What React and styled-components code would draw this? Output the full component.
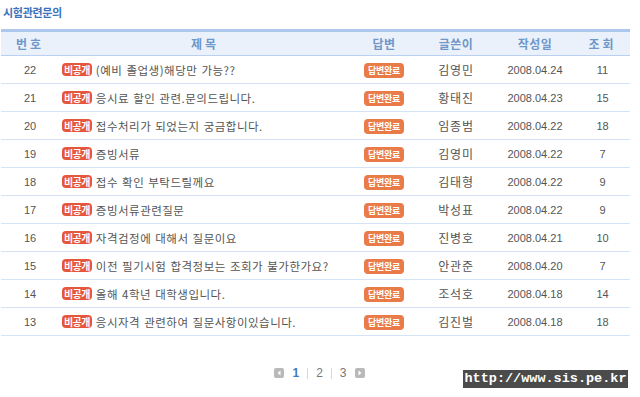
import styled, { createGlobalStyle } from "styled-components";

const GlobalStyle = createGlobalStyle`
  body {
    margin: 0;
    background: #fff;
    font-family: "Noto Sans CJK KR", "Noto Sans", sans-serif;
  }
`;

const rows = [
  [22, "(예비 졸업생)해당만 가능??", "김영민", "2008.04.24", 11],
  [21, "응시료 할인 관련.문의드립니다.", "황태진", "2008.04.23", 15],
  [20, "접수처리가 되었는지 궁금합니다.", "임종범", "2008.04.22", 18],
  [19, "증빙서류", "김영미", "2008.04.22", 7],
  [18, "접수 확인 부탁드릴께요", "김태형", "2008.04.22", 9],
  [17, "증빙서류관련질문", "박성표", "2008.04.22", 9],
  [16, "자격검정에 대해서 질문이요", "진병호", "2008.04.21", 10],
  [15, "이전 필기시험 합격정보는 조회가 불가한가요?", "안관준", "2008.04.20", 7],
  [14, "올해 4학년 대학생입니다.", "조석호", "2008.04.18", 14],
  [13, "응시자격 관련하여 질문사항이있습니다.", "김진벌", "2008.04.18", 18],
];

const Page = styled.div`
  position: relative;
  width: 640px;
  height: 397px;
  padding: 5px 0 0 1px;
  box-sizing: border-box;
`;

const Title = styled.h2`
  margin: 0 0 0 2px;
  font-size: 11px;
  line-height: 14px;
  font-weight: 700;
  color: #3a72bd;
  letter-spacing: -0.3px;
`;

const Table = styled.table`
  margin-top: 10px;
  width: 629px;
  border-collapse: collapse;
  table-layout: fixed;
  font-size: 11px;
  color: #555;
`;

const HeadRow = styled.tr`
  background: #eaf1fb;
  border-top: 3px solid #adc8ec;
  border-bottom: 1px solid #b9d0f0;
`;

const Th = styled.th`
  height: 23px;
  padding: 0;
  font-size: 12px;
  font-weight: 700;
  color: #6f97c9;
  letter-spacing: ${(p) => (p.$wide ? "3px" : "0.5px")};
  text-align: center;
`;

const Row = styled.tr`
  border-bottom: 1px solid #d3e3f8;
`;

const Td = styled.td`
  height: 27px;
  padding: 0;
  text-align: ${(p) => (p.$left ? "left" : "center")};
  padding-left: ${(p) => (p.$left ? "3px" : "0")};
  white-space: nowrap;
  overflow: hidden;
  font-family: ${(p) =>
    p.$num ? '"Liberation Sans", "Noto Sans", sans-serif' : "inherit"};
  color: #555;
`;

const Secret = styled.span`
  display: inline-block;
  vertical-align: 1px;
  margin-right: 4px;
  padding: 0 2px;
  height: 13px;
  line-height: 13px;
  border-radius: 4px;
  background: #e5573d;
  color: #fff;
  font-size: 10px;
  font-weight: 700;
  letter-spacing: -0.6px;
`;

const Subject = styled.span`
  font-size: 11.5px;
  letter-spacing: 0.5px;
  word-spacing: 1px;
`;

const Writer = styled.span`
  font-size: 12px;
  letter-spacing: 0.8px;
`;

const Done = styled.span`
  display: inline-block;
  padding: 0 4px;
  height: 15px;
  line-height: 15px;
  border-radius: 4px;
  background: #e97b48;
  color: #fff;
  font-size: 9px;
  font-weight: 700;
  letter-spacing: -0.3px;
`;

const Pager = styled.div`
  display: flex;
  justify-content: center;
  align-items: center;
  gap: 8px;
  margin-top: 30px;
  padding-right: 2px;
  font-family: "Liberation Sans", sans-serif;
  font-size: 12px;
  color: #777;
`;

const Arrow = styled.span`
  display: inline-flex;
  align-items: center;
  justify-content: center;
  width: 10px;
  height: 10px;
  border-radius: 2px;
  background: #b9b9b9;
`;

const PageNum = styled.span`
  color: ${(p) => (p.$active ? "#3f7ac7" : "#777")};
  font-weight: ${(p) => (p.$active ? 700 : 400)};
`;

const Sep = styled.span`
  width: 1px;
  height: 11px;
  background: #d8d8d8;
`;

const Stamp = styled.div`
  position: absolute;
  left: 463px;
  top: 370px;
  width: 165px;
  height: 18px;
  line-height: 18px;
  background: #4b4b4b;
  color: #fff;
  font-family: "Liberation Mono", monospace;
  font-weight: 700;
  font-size: 13.5px;
  text-align: center;
`;

const Tri = ({ dir }) => (
  <svg width="6" height="6" viewBox="0 0 6 6">
    <path
      d={dir === "left" ? "M4.5 0.5 L1.5 3 L4.5 5.5 Z" : "M1.5 0.5 L4.5 3 L1.5 5.5 Z"}
      fill="#fff"
    />
  </svg>
);

export default function App() {
  return (
    <Page>
      <GlobalStyle />
      <Title>시험관련문의</Title>
      <Table>
        <colgroup>
          <col style={{ width: 58 }} />
          <col style={{ width: 292 }} />
          <col style={{ width: 66 }} />
          <col style={{ width: 78 }} />
          <col style={{ width: 80 }} />
          <col style={{ width: 55 }} />
        </colgroup>
        <thead>
          <HeadRow>
            <Th $wide>번호</Th>
            <Th $wide>제목</Th>
            <Th>답변</Th>
            <Th>글쓴이</Th>
            <Th>작성일</Th>
            <Th $wide>조회</Th>
          </HeadRow>
        </thead>
        <tbody>
          {rows.map(([no, subject, writer, date, hits]) => (
            <Row key={no}>
              <Td $num>{no}</Td>
              <Td $left>
                <Secret>비공개</Secret>
                <Subject>{subject}</Subject>
              </Td>
              <Td>
                <Done>답변완료</Done>
              </Td>
              <Td>
                <Writer>{writer}</Writer>
              </Td>
              <Td $num>{date}</Td>
              <Td $num>{hits}</Td>
            </Row>
          ))}
        </tbody>
      </Table>
      <Pager>
        <Arrow>
          <Tri dir="left" />
        </Arrow>
        <PageNum $active>1</PageNum>
        <Sep />
        <PageNum>2</PageNum>
        <Sep />
        <PageNum>3</PageNum>
        <Arrow>
          <Tri dir="right" />
        </Arrow>
      </Pager>
      <Stamp>http://www.sis.pe.kr</Stamp>
    </Page>
  );
}
